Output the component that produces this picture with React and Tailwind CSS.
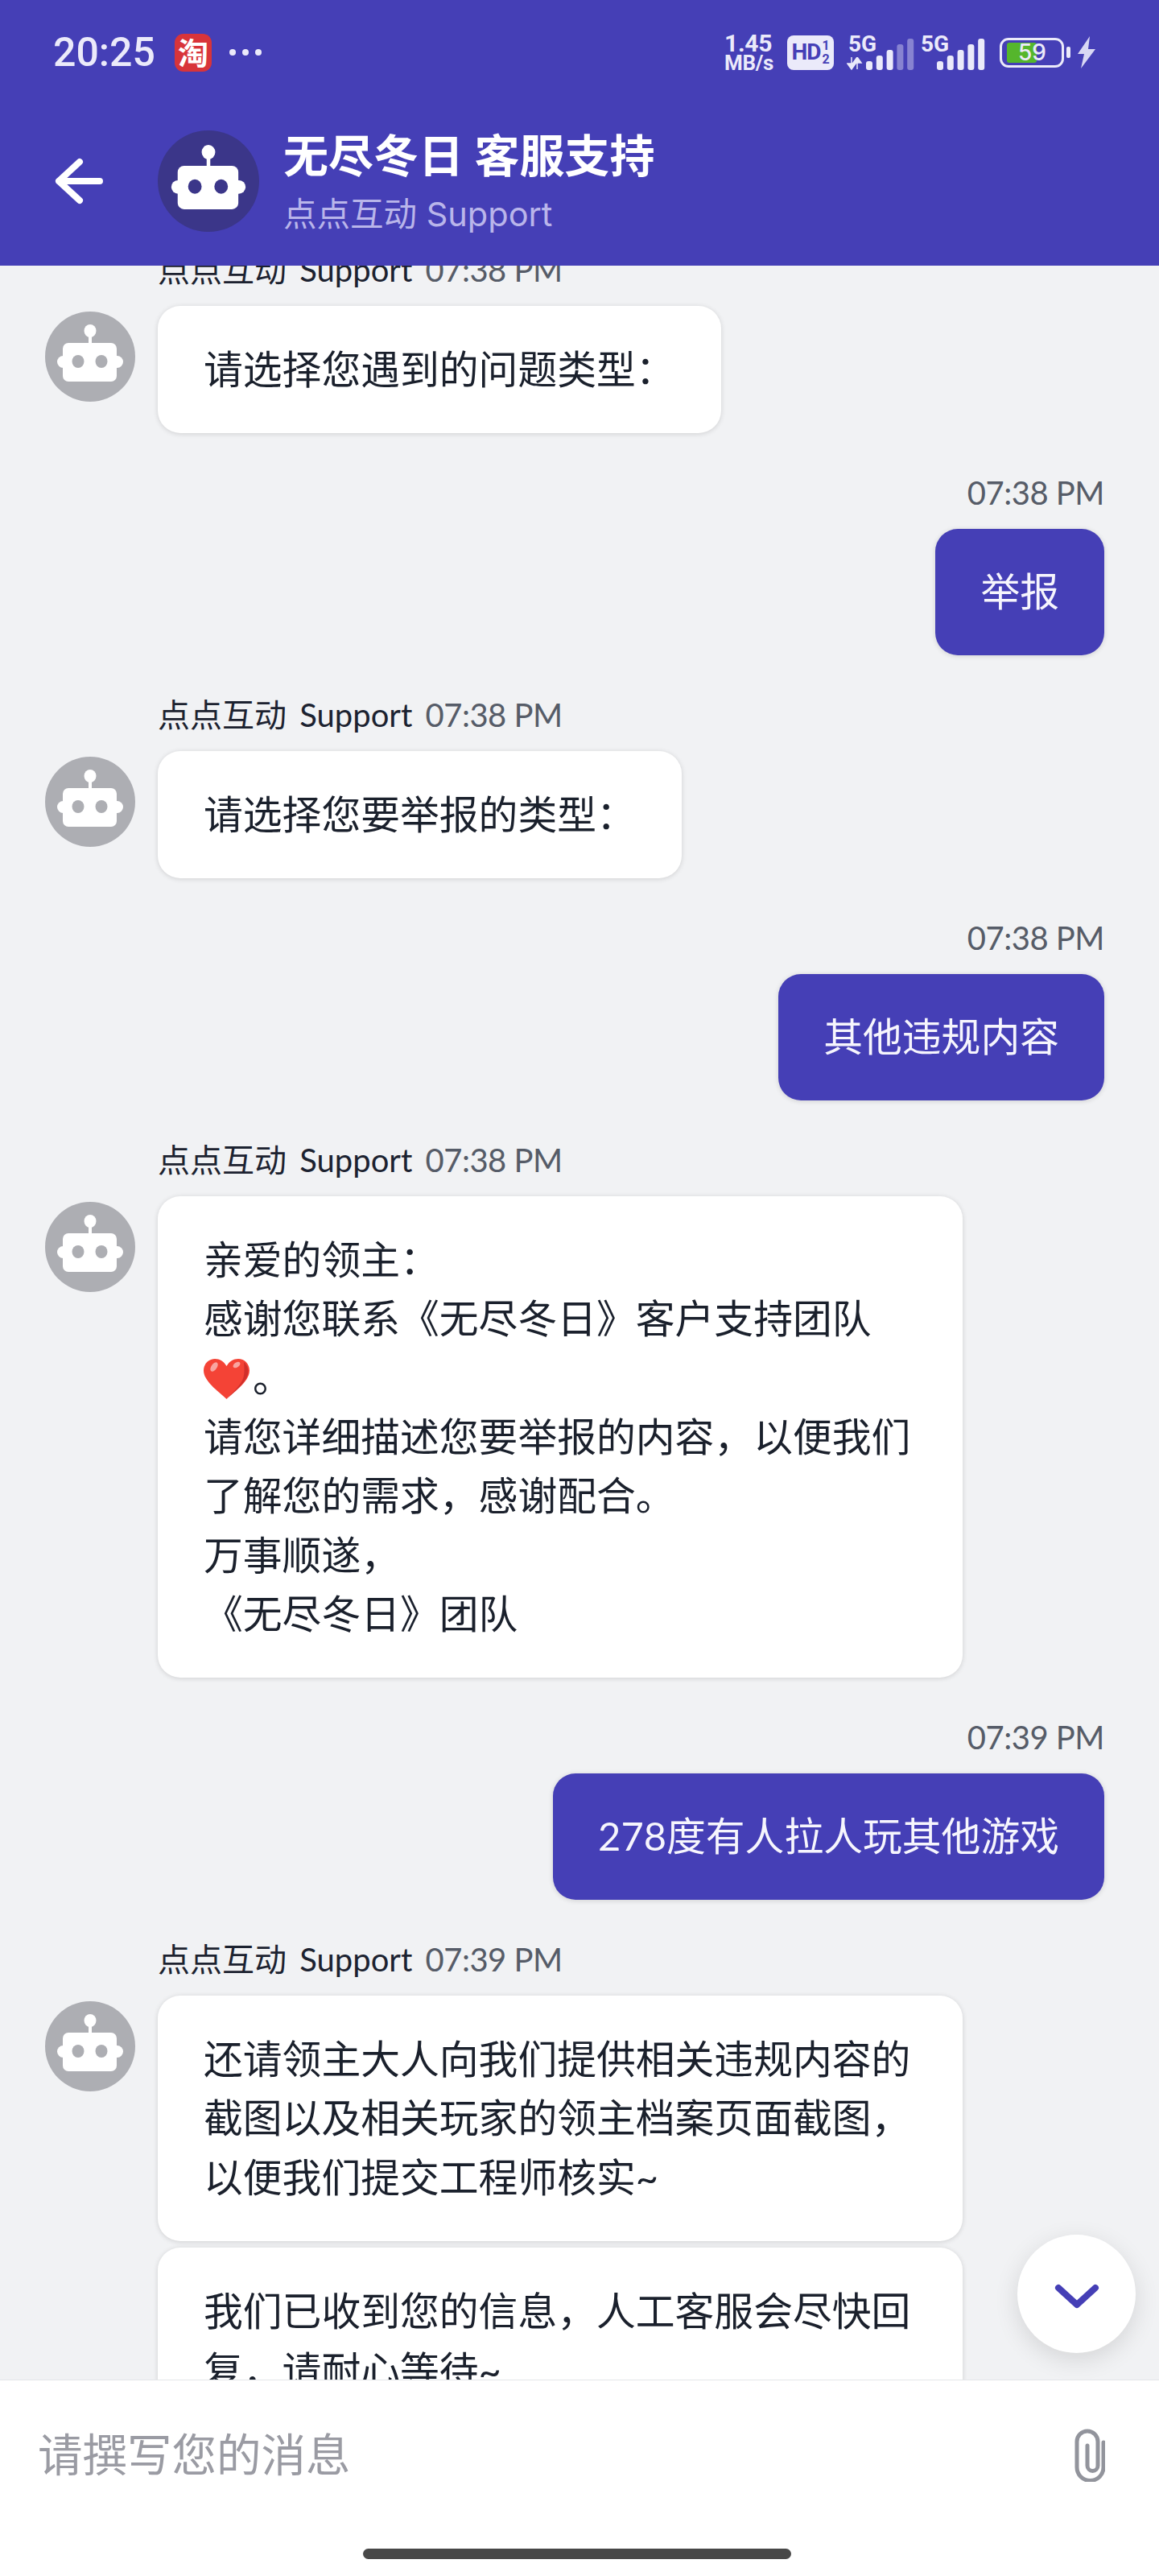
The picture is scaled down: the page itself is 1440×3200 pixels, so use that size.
const FONT = "font-['Lato','Noto_Sans_CJK_SC',sans-serif]";

function Robot({ size, bg, className = "" }) {
  return (
    <svg width={size} height={size} viewBox="0 0 112 112" className={`shrink-0 ${className}`}>
      <circle cx="56" cy="56" r="56" fill={bg} />
      <rect x="54" y="24" width="4" height="17" fill="#fff" />
      <ellipse cx="56" cy="24" rx="7.5" ry="8" fill="#fff" />
      <rect x="15" y="55" width="82" height="15" rx="7.5" fill="#fff" />
      <rect x="22" y="39" width="67" height="48" rx="7" fill="#fff" />
      <ellipse cx="41" cy="62" rx="7.5" ry="8" fill={bg} />
      <ellipse cx="70" cy="62" rx="7.5" ry="8" fill={bg} />
    </svg>
  );
}

function Bars({ dim = 0 }) {
  const data = [11, 18, 25, 32, 39];
  return (
    <svg width="60" height="40" viewBox="0 0 60 40" className="block">
      {data.map((h, i) => (
        <rect
          key={i}
          x={i * 12.8}
          y={40 - h}
          width="8"
          height={h}
          rx="3"
          fill="#ebeafa"
          opacity={i >= data.length - dim ? 0.4 : 1}
        />
      ))}
    </svg>
  );
}

function StatusRight() {
  return (
    <div className="flex items-center text-[#ebeafa] font-['Roboto',sans-serif]">
      <div className="flex flex-col font-bold w-[78px] tracking-[-0.3px]">
        <span className="text-[30px] leading-[26px]">1.45</span>
        <span className="text-[26px] leading-[23px]">MB/s</span>
      </div>
      <div className="w-[58px] h-[43px] rounded-[8px] bg-[#ebeafa] flex items-center justify-center text-[#453fb6] font-bold gap-[2px]">
        <span className="text-[28px] leading-none tracking-[-1px]">HD</span>
        <span className="flex flex-col text-[16px] leading-[17px]">
          <span>1</span>
          <span>2</span>
        </span>
      </div>
      <div className="ml-[16px] w-[86px] h-[44px] relative">
        <span className="block font-bold text-[28px] leading-[24px] pl-[2px]">5G</span>
        <svg width="20" height="16" viewBox="0 0 20 16" className="absolute left-0 bottom-0">
          <path d="M6 0v9M1 8h10L6 15zM13 15V6M8 7h10L13 0z" stroke="#ebeafa" strokeWidth="1.5" fill="#ebeafa" />
        </svg>
        <div className="absolute left-[24px] bottom-0">
          <Bars dim={2} />
        </div>
      </div>
      <div className="ml-[6px] w-[84px] h-[44px] relative">
        <span className="block font-bold text-[28px] leading-[24px]">5G</span>
        <div className="absolute left-[20px] bottom-0">
          <Bars />
        </div>
      </div>
      <div className="ml-[14px] w-[80px] h-[37px] rounded-[11px] border-[3px] border-[#ebeafa] px-[6px] py-[3px] relative">
        <div className="w-[37px] h-full rounded-[3px] bg-[#55b62c]" />
        <span className="absolute left-[20px] inset-y-0 flex items-center text-[28px] leading-none font-medium text-[#ebeafa] font-['Inter',sans-serif]">59</span>
      </div>
      <div className="ml-[3px] w-[5px] h-[14px] rounded-[2px] bg-[#ebeafa]" />
      <svg width="24" height="40" viewBox="0 0 24 40" className="ml-[8px]">
        <path d="M16 0L1 22h8L5 40l18-24h-9z" fill="#d9d8f4" />
      </svg>
    </div>
  );
}

function Header() {
  return (
    <div className={`shrink-0 bg-[#453fb6] relative z-10 ${FONT}`}>
      <div className="h-[120px] pt-[10px] pl-[66px] pr-[78px] flex items-center justify-between">
        <div className="flex items-center">
          <span className="text-[50px] leading-none font-medium text-[#ebeafa] w-[151px] font-['Roboto',sans-serif]">20:25</span>
          <div className="w-[46px] h-[47px] rounded-[11px] bg-[#d8343a] flex items-center justify-center text-white text-[38px] leading-none font-bold">淘</div>
          <div className="flex gap-[8px] ml-[22px]">
            <span className="w-[8px] h-[8px] rounded-full bg-[#ebeafa]" />
            <span className="w-[8px] h-[8px] rounded-full bg-[#ebeafa]" />
            <span className="w-[8px] h-[8px] rounded-full bg-[#ebeafa]" />
          </div>
        </div>
        <StatusRight />
      </div>
      <div className="h-[210px] flex items-center">
        <svg width="64" height="60" viewBox="0 0 64 60" className="ml-[65px]">
          <path d="M8 30H59M34 6L8 30l26 24" fill="none" stroke="#fff" strokeWidth="8" strokeLinecap="round" strokeLinejoin="round" />
        </svg>
        <Robot size={126} bg="#3b3689" className="ml-[67px]" />
        <div className="ml-[30px] pt-[10px]">
          <div className="text-[56px] leading-[72px] font-bold text-white whitespace-nowrap">无尽冬日 客服支持</div>
          <div className="text-[41.5px] leading-[74px] text-[#b9b5ea] whitespace-nowrap font-['Inter','Noto_Sans_CJK_SC',sans-serif]">点点互动 Support</div>
        </div>
      </div>
    </div>
  );
}

function Lines({ lines }) {
  return lines.map((l, i) => (
    <div key={i} className="whitespace-nowrap">
      {l}
    </div>
  ));
}

function Label({ name, time }) {
  return (
    <div className="h-[50px] mb-[20px] text-[40px] leading-[50px] whitespace-nowrap">
      {name && <span className="text-[#1c2230] [word-spacing:6px]">{name} </span>}
      <span className="text-[#565c68] tracking-[-0.5px]">{time}</span>
    </div>
  );
}

function Bubble({ children, className = "" }) {
  return (
    <div className={`rounded-[28px] bg-white px-[57px] pt-[42px] pb-[43px] shadow-[0_1px_6px_rgba(0,0,0,0.14)] text-[48.8px] leading-[73.4px] text-[#1a202c] ${className}`}>
      {children}
    </div>
  );
}

function Bot({ time, children, first }) {
  return (
    <div className={`flex items-start pl-[56px] ${first ? "" : "mt-[49px]"}`}>
      <div className="w-[140px] shrink-0 pt-[77px]">
        <Robot size={112} bg="#adaeb3" />
      </div>
      <div className="flex flex-col items-start">
        <Label name="点点互动 Support" time={time} />
        {children}
      </div>
    </div>
  );
}

function Me({ time, text }) {
  return (
    <div className="mt-[49px] flex flex-col items-end pr-[68px]">
      <Label time={time} />
      <div className="rounded-[28px] bg-[#453fb6] px-[56px] pt-[40.500px] pb-[42.500px] shadow-[0_1px_6px_rgba(0,0,0,0.14)] text-[48.8px] leading-[73.4px] text-[#f6f5fd] whitespace-nowrap">
        {text}
      </div>
    </div>
  );
}

function Heart() {
  return (
    <svg width="57" height="50" viewBox="0 0 57 50" className="inline-block align-[-9px] mr-[4px]">
      <path d="M28.500 50C22 43 0 29 0 14.500 0 6 6.500 0 14 0c6 0 11 3 14.500 9C32 3 37 0 43 0c7.500 0 14 6 14 14.500C57 29 35 43 28.500 50z" fill="#f44336" />
      <path d="M50 4c5 4 7 12 4 18-4 9-15 19-25.500 28 8-9 18-17 21-27 1.500-6 1-13.500.5-19z" fill="#c62828" opacity="0.75" />
      <ellipse cx="13" cy="10" rx="3.500" ry="6.500" transform="rotate(35 13 10)" fill="#f8a5a0" />
      <ellipse cx="41" cy="7.500" rx="3" ry="5" transform="rotate(55 41 7.500)" fill="#f8a5a0" />
    </svg>
  );
}

function Messages() {
  return (
    <div className="-mt-[20px]">
      <Bot time="07:38 PM" first>
        <Bubble>
          <Lines lines={["请选择您遇到的问题类型："]} />
        </Bubble>
      </Bot>
      <Me time="07:38 PM" text="举报" />
      <Bot time="07:38 PM">
        <Bubble>
          <Lines lines={["请选择您要举报的类型："]} />
        </Bubble>
      </Bot>
      <Me time="07:38 PM" text="其他违规内容" />
      <Bot time="07:38 PM">
        <Bubble className="w-[1000px]">
          <Lines
            lines={[
              "亲爱的领主：",
              "感谢您联系《无尽冬日》客户支持团队",
              <>
                <Heart />。
              </>,
              "请您详细描述您要举报的内容，以便我们",
              "了解您的需求，感谢配合。",
              "万事顺遂，",
              "《无尽冬日》团队",
            ]}
          />
        </Bubble>
      </Bot>
      <Me time="07:39 PM" text="278度有人拉人玩其他游戏" />
      <Bot time="07:39 PM">
        <div className="flex flex-col gap-[8px]">
          <Bubble className="w-[1000px]">
            <Lines
              lines={[
                "还请领主大人向我们提供相关违规内容的",
                "截图以及相关玩家的领主档案页面截图，",
                "以便我们提交工程师核实~",
              ]}
            />
          </Bubble>
          <Bubble className="w-[1000px]">
            <Lines lines={["我们已收到您的信息，人工客服会尽快回", "复，请耐心等待~"]} />
          </Bubble>
        </div>
      </Bot>
    </div>
  );
}

export default function App() {
  return (
    <div className={`w-[1440px] h-[3200px] flex flex-col overflow-hidden bg-[#f1f2f4] ${FONT}`}>
      <Header />
      <div className="flex-1 min-h-0 relative">
        <div className="h-full overflow-hidden">
          <Messages />
        </div>
        <button className="absolute right-[29px] bottom-[33px] z-10 w-[147px] h-[147px] rounded-full bg-white flex items-center justify-center shadow-[0_8px_30px_rgba(0,0,0,0.12)]">
          <svg width="58" height="40" viewBox="0 0 58 40">
            <path d="M6 12L29 33 52 12" fill="none" stroke="#453fb6" strokeWidth="8" strokeLinecap="round" strokeLinejoin="round" />
          </svg>
        </button>
      </div>
      <div className="relative shrink-0 h-[244px] bg-white border-t border-[#e4e5e8] pt-[56px] pl-[47px] pr-[64px]">
        <div className="flex items-start justify-between">
          <span className="text-[55.500px] leading-[72px] text-[#9a9ba3]">请撰写您的消息</span>
          <svg width="40" height="66" viewBox="0 0 40 66" className="mt-[4px] mr-[3px]">
            <path d="M38 17V48A16.500 16.500 0 0 1 5 48V16A13 13 0 0 1 31 16V46A6.500 6.500 0 0 1 18 46V21" fill="none" stroke="#92949c" strokeWidth="5" strokeLinecap="round" />
          </svg>
        </div>
        <div className="absolute left-[451px] bottom-[21px] w-[532px] h-[13px] rounded-full bg-[#484848]" />
      </div>
    </div>
  );
}
